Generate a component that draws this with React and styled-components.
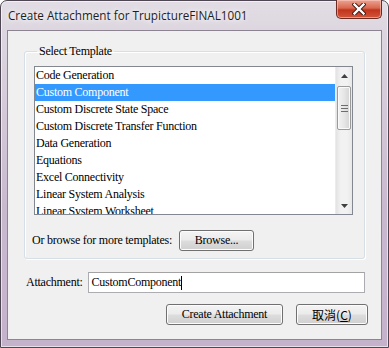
import React from 'react'
import styled, { createGlobalStyle } from 'styled-components'

const GlobalStyle = createGlobalStyle`
  html, body {
    margin: 0;
    padding: 0;
    width: 389px;
    height: 348px;
    overflow: hidden;
    background: #ffffff;
  }
  * { box-sizing: border-box; }
`

const Window = styled.div`
  width: 389px;
  height: 348px;
  display: flex;
  flex-direction: column;
  padding: 0 6px 7px 6px;
  border: 1px solid #4e4652;
  border-radius: 7px 7px 0 0;
  background: linear-gradient(180deg, #e2dde4 0%, #ddd6e0 30px, #c9b9cf 60%, #c4b2cb 100%);
  box-shadow: inset 0 0 0 1px rgba(255,255,255,0.6);
`

const TitleBar = styled.div`
  height: 29px;
  display: flex;
  align-items: flex-start;
  justify-content: space-between;
  flex-shrink: 0;
`

const Title = styled.div`
  padding: 6px 0 0 1px;
  font-family: "Open Sans", "Noto Sans", sans-serif;
  font-size: 11.7px;
  color: #1e1e1e;
  text-shadow: 0 0 8px #fff, 0 0 4px #fff;
  white-space: nowrap;
`

const CloseButton = styled.div`
  width: 46px;
  height: 19px;
  margin-top: -1px;
  border: 1px solid #6b2a22;
  border-top: none;
  border-radius: 0 0 5px 5px;
  background: linear-gradient(180deg, #eba493 0%, #d9674f 45%, #c2341c 55%, #d0563a 100%);
  box-shadow: inset 0 0 0 1px rgba(255,210,200,0.55);
  display: flex;
  align-items: center;
  justify-content: center;
`

const Client = styled.div`
  flex: 1;
  display: flex;
  flex-direction: column;
  border: 1px solid #8c8490;
  background: #f0f0f0;
  padding: 13px 15px 0 16px;
  font-family: "Liberation Serif", "Times New Roman", serif;
  font-size: 12px;
  letter-spacing: -0.25px;
  color: #000;
`

const Group = styled.fieldset`
  margin: 0;
  width: 341px;
  height: 215px;
  padding: 8px 10px 0 9px;
  border: 1px solid #d5dfe5;
  border-radius: 3px;
  box-shadow: 1px 1px 0 #ffffff, inset 1px 1px 0 #ffffff;
`

const Legend = styled.legend`
  padding: 0 2px;
  margin-left: 3px;
  line-height: 14px;
`

const ListBox = styled.div`
  width: 319px;
  height: 149px;
  border: 1px solid #828790;
  background: #fff;
  display: flex;
  overflow: hidden;
`

const Items = styled.div`
  flex: 1;
  display: flex;
  flex-direction: column;
`

const Item = styled.div`
  height: 17px;
  line-height: 17px;
  padding-left: 1px;
  white-space: nowrap;
  flex-shrink: 0;
  background: ${p => (p.$selected ? '#3399ff' : 'transparent')};
  color: ${p => (p.$selected ? '#fff' : '#000')};
`

const ScrollBar = styled.div`
  width: 17px;
  display: flex;
  flex-direction: column;
  background: linear-gradient(90deg, #e3e3e3, #f2f2f2 30%, #f2f2f2 70%, #e8e8e8);
  border-left: 1px solid #ececec;
`

const Arrow = styled.div`
  height: 17px;
  display: flex;
  align-items: center;
  justify-content: center;
  flex-shrink: 0;
`

const Track = styled.div`
  flex: 1;
  padding-top: 2px;
`

const Thumb = styled.div`
  height: 44px;
  margin: 0 1px;
  border: 1px solid #9a9a9a;
  border-radius: 2px;
  background: linear-gradient(90deg, #f3f3f3 0%, #e6e6e6 50%, #d4d4d4 100%);
  box-shadow: inset 0 0 0 1px #fafafa;
  display: flex;
  align-items: center;
  justify-content: center;
`

const BrowseRow = styled.div`
  display: flex;
  align-items: center;
  margin: 15px 0 0 -2px;
  gap: 7px;
`

const Button = styled.div`
  width: ${p => p.$w}px;
  height: 21px;
  border: 1px solid #707070;
  border-radius: 3px;
  background: linear-gradient(180deg, #f4f4f4 0%, #ebebeb 48%, #dddddd 52%, #cfcfcf 100%);
  box-shadow: inset 0 0 0 1px #fcfcfc;
  display: flex;
  align-items: center;
  justify-content: center;
  font-family: ${p => (p.$cjk ? '"Noto Sans CJK TC", "Liberation Sans", sans-serif' : 'inherit')};
  letter-spacing: ${p => (p.$cjk ? '0' : 'inherit')};
  font-size: 12px;
  color: #000;
`

const Underline = styled.span`
  text-decoration: underline;
`

const FieldRow = styled.div`
  display: flex;
  align-items: center;
  margin: 13px 0 0 2px;
  gap: 5px;
`

const Input = styled.div`
  width: 277px;
  height: 21px;
  border: 1px solid #abadb3;
  border-top-color: #a3a3a3;
  background: #fff;
  padding: 0 0 0 3px;
  display: flex;
  align-items: center;
`

const Caret = styled.span`
  display: inline-block;
  width: 1px;
  height: 14px;
  background: #000;
`

const ButtonRow = styled.div`
  display: flex;
  justify-content: flex-end;
  gap: 13px;
  margin: 11px -2px 0 0;
`

const templates = [
  'Code Generation',
  'Custom Component',
  'Custom Discrete State Space',
  'Custom Discrete Transfer Function',
  'Data Generation',
  'Equations',
  'Excel Connectivity',
  'Linear System Analysis',
  'Linear System Worksheet',
]

export default function App() {
  return (
    <>
      <GlobalStyle />
      <Window>
        <TitleBar>
          <Title>Create Attachment for TrupictureFINAL1001</Title>
          <CloseButton>
            <svg width="14" height="12" viewBox="0 0 14 12">
              <path d="M2.5 1.5 L11.5 10.5 M11.5 1.5 L2.5 10.5" stroke="#3a1a14" strokeWidth="4.2" strokeLinecap="square" />
              <path d="M2.5 1.5 L11.5 10.5 M11.5 1.5 L2.5 10.5" stroke="#ffffff" strokeWidth="2.4" strokeLinecap="square" />
            </svg>
          </CloseButton>
        </TitleBar>
        <Client>
          <Group>
            <Legend>Select Template</Legend>
            <ListBox>
              <Items>
                {templates.map(t => (
                  <Item key={t} $selected={t === 'Custom Component'}>{t}</Item>
                ))}
              </Items>
              <ScrollBar>
                <Arrow>
                  <svg width="7" height="4" viewBox="0 0 7 4"><path d="M0 4 L3.5 0 L7 4 Z" fill="#404040" /></svg>
                </Arrow>
                <Track>
                  <Thumb>
                    <svg width="7" height="7" viewBox="0 0 7 7">
                      <path d="M0 0.5 H7 M0 3.5 H7 M0 6.5 H7" stroke="#6d6d6d" strokeWidth="1" />
                    </svg>
                  </Thumb>
                </Track>
                <Arrow>
                  <svg width="7" height="4" viewBox="0 0 7 4"><path d="M0 0 L7 0 L3.5 4 Z" fill="#404040" /></svg>
                </Arrow>
              </ScrollBar>
            </ListBox>
            <BrowseRow>
              <span>Or browse for more templates:</span>
              <Button $w={75}>Browse...</Button>
            </BrowseRow>
          </Group>
          <FieldRow>
            <span>Attachment:</span>
            <Input>CustomComponent<Caret /></Input>
          </FieldRow>
          <ButtonRow>
            <Button $w={117}>Create Attachment</Button>
            <Button $w={72} $cjk>取消(<Underline>C</Underline>)</Button>
          </ButtonRow>
        </Client>
      </Window>
    </>
  )
}
